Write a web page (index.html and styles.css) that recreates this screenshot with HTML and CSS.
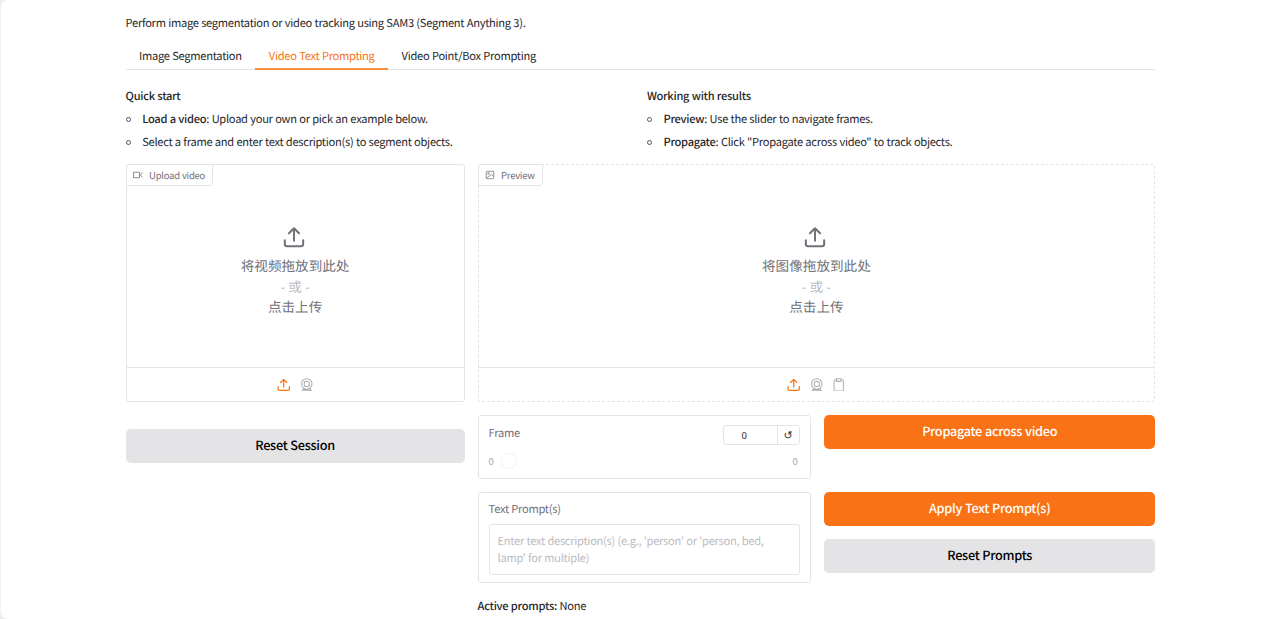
FILE: index.html
```
<!DOCTYPE html>
<html lang="en">
<head>
    <meta charset="utf-8">
    <title>SAM3 Segmentation and Tracking</title>
    <link rel="stylesheet" href="styles.css">
</head>
<body>
    <svg class="sprite" width="0" height="0">
        <symbol id="upload" viewBox="0 0 24 24" fill="none" stroke="currentColor" stroke-width="2.2" stroke-linecap="round" stroke-linejoin="round">
            <path d="M12 16V2.5M6.5 8L12 2.5L17.5 8M2 15.5v4a2.5 2.5 0 0 0 2.5 2.5h15a2.5 2.5 0 0 0 2.5-2.5v-4"/>
        </symbol>
        <symbol id="webcam" viewBox="0 0 24 24" fill="none" stroke="currentColor" stroke-width="1.8">
            <circle cx="12" cy="10.5" r="9.3"/>
            <circle cx="12" cy="10.5" r="4.8"/>
            <path d="M7 18.5L4 22.6H20L17 18.5M7 20.6H17"/>
        </symbol>
        <symbol id="clipboard" viewBox="0 0 24 24" fill="none" stroke="currentColor" stroke-width="1.8">
            <path d="M8 3H5.5A1.8 1.8 0 0 0 3.7 4.8V21.2A1.8 1.8 0 0 0 5.5 23H18.5A1.8 1.8 0 0 0 20.3 21.2V4.8A1.8 1.8 0 0 0 18.5 3H16M8 1.5H16V6H8Z"/>
        </symbol>
    </svg>

    <div class="page">
        <main class="container">
            <p class="intro">Perform image segmentation or video tracking using SAM3 (Segment Anything 3).</p>

            <nav class="tabs">
                <button class="tab">Image Segmentation</button>
                <button class="tab active">Video Text Prompting</button>
                <button class="tab">Video Point/Box Prompting</button>
            </nav>

            <div class="help">
                <div>
                    <h4>Quick start</h4>
                    <ul>
                        <li><b>Load a video</b>: Upload your own or pick an example below.</li>
                        <li>Select a frame and enter text description(s) to segment objects.</li>
                    </ul>
                </div>
                <div>
                    <h4>Working with results</h4>
                    <ul>
                        <li><b>Preview</b>: Use the slider to navigate frames.</li>
                        <li><b>Propagate</b>: Click "Propagate across video" to track objects.</li>
                    </ul>
                </div>
            </div>

            <div class="columns">
                <div class="left">
                    <div class="panel">
                        <div class="panel-label">
                            <svg class="label-icon" viewBox="0 0 20 20" fill="none" stroke="currentColor" stroke-width="1.6"><path d="M1 4.5H13V15.5H1ZM19 5.5L15.5 8.5V11.5L19 14.5"/></svg>
                            Upload video
                        </div>
                        <div class="drop">
                            <svg class="drop-icon"><use href="#upload"/></svg>
                            <span>将视频拖放到此处</span>
                            <span class="or">- 或 -</span>
                            <span>点击上传</span>
                        </div>
                        <div class="sources">
                            <svg class="source up"><use href="#upload"/></svg>
                            <svg class="source"><use href="#webcam"/></svg>
                        </div>
                    </div>
                    <button class="btn reset-session">Reset Session</button>
                </div>

                <div class="right">
                    <div class="panel dashed">
                        <div class="panel-label">
                            <svg class="label-icon" viewBox="0 0 20 20" fill="none" stroke="currentColor" stroke-width="1.5"><rect x="2.5" y="2.5" width="15" height="15" rx="1.5"/><circle cx="7" cy="7" r="1.5"/><path d="M3 16L12.5 9L17.5 13"/></svg>
                            Preview
                        </div>
                        <div class="drop">
                            <svg class="drop-icon"><use href="#upload"/></svg>
                            <span>将图像拖放到此处</span>
                            <span class="or">- 或 -</span>
                            <span>点击上传</span>
                        </div>
                        <div class="sources">
                            <svg class="source up"><use href="#upload"/></svg>
                            <svg class="source"><use href="#webcam"/></svg>
                            <svg class="source"><use href="#clipboard"/></svg>
                        </div>
                    </div>

                    <div class="controls">
                        <div class="block frame">
                            <div class="frame-head">
                                <span class="block-label">Frame</span>
                                <div class="number">
                                    <span class="value">0</span>
                                    <span class="undo">↺</span>
                                </div>
                            </div>
                            <div class="slider">
                                <span>0</span>
                                <i class="thumb"></i>
                                <span class="max">0</span>
                            </div>
                        </div>
                        <div class="buttons">
                            <button class="btn primary">Propagate across video</button>
                        </div>
                        <div class="block prompt">
                            <span class="block-label">Text Prompt(s)</span>
                            <textarea placeholder="Enter text description(s) (e.g., 'person' or 'person, bed, lamp' for multiple)"></textarea>
                        </div>
                        <div class="buttons">
                            <button class="btn primary">Apply Text Prompt(s)</button>
                            <button class="btn">Reset Prompts</button>
                        </div>
                    </div>

                    <p class="active-prompts"><b>Active prompts:</b> None</p>
                </div>
            </div>
        </main>
    </div>
</body>
</html>
```
FILE: styles.css
```
* { box-sizing: border-box; }
body {
    margin: 0;
    background: #eeeeee;
    color: #27272a;
    font-family: "Noto Sans CJK SC", sans-serif;
    font-size: 11.1px;
    letter-spacing: -0.27px;
    word-spacing: 0.3px;
    line-height: 20px;
    text-rendering: geometricPrecision;
    overflow: hidden;
}
p, h4, ul { margin: 0; padding: 0; }
b, h4 { font-weight: 500; }
button, textarea { font-family: inherit; letter-spacing: inherit; word-spacing: inherit; text-rendering: inherit; }
svg { display: block; flex-shrink: 0; }
.sprite { position: absolute; }

.page {
    height: 619px;
    background: #fff;
    border-left: 1px solid #f4f4f5;
    border-radius: 8px 0 0 8px;
}
.container { width: 1029.6px; margin-left: 124.6px; padding-top: 13px; }

.tabs { display: flex; height: 27px; margin-top: 10px; border-bottom: 1px solid #e4e4e7; }
.tab {
    height: 27px;
    padding: 2px 13.5px 0;
    border: 0;
    border-bottom: 2px solid transparent;
    background: none;
    color: #27272a;
    font-size: 11.1px;
    line-height: 23px;
}
.tab.active { color: #f97316; border-color: #fb8c3e; }

.help { display: grid; grid-template-columns: 1fr 1fr; column-gap: 13px; margin-top: 16px; }
.help h4 { font-size: 11.1px; line-height: 20px; margin-bottom: 3px; }
.help ul { list-style: none; }
.help li { display: block; position: relative; padding-left: 16.6px; height: 23px; }
.help li::before {
    content: "";
    position: absolute;
    left: 0;
    top: 8px;
    width: 5px;
    height: 5px;
    box-sizing: border-box;
    border: 1px solid #52525b;
    border-radius: 50%;
}

.columns { display: flex; gap: 13px; margin-top: 9px; }
.left { width: 339px; }
.right { width: 677.6px; }

.panel {
    display: flex;
    flex-direction: column;
    position: relative;
    height: 238px;
    border: 1px solid #e4e4e7;
    border-radius: 3px;
}
.panel.dashed { border-style: dashed; }
.panel-label {
    position: absolute;
    left: -1px;
    top: -1px;
    display: flex;
    align-items: center;
    gap: 6px;
    height: 22px;
    padding: 0 7px 0 6.5px;
    border: 1px solid #e4e4e7;
    border-radius: 3px 0 3px 0;
    background: #fff;
    color: #71717a;
    font-size: 9.5px;
}
.label-icon { width: 10px; height: 10px; }
.drop {
    flex: 1;
    display: flex;
    flex-direction: column;
    align-items: center;
    justify-content: center;
    padding-top: 10.6px;
    color: #71717a;
    font-size: 13.6px;
    letter-spacing: 0;
    word-spacing: 0;
    line-height: 20.4px;
}
.drop-icon { width: 22px; height: 22px; margin: 0 2px 7px 0; color: #71717a; }
.or { color: #bbbbc2; }
.sources {
    display: flex;
    align-items: center;
    justify-content: center;
    gap: 9px;
    height: 34px;
    border-top: 1px solid #e4e4e7;
    color: #adadb5;
}
.source { width: 13.5px; height: 13.5px; }
.source.up { color: #f97316; }

.btn {
    display: block;
    width: 100%;
    height: 34px;
    padding: 0 0 2px;
    border: 0;
    border-radius: 5px;
    background: #e4e4e7;
    color: #000;
    font-size: 12.7px;
    font-weight: 500;
    line-height: 32px;
}
.btn.primary { background: #f97316; color: #fff; }
.reset-session { margin-top: 27px; }

.controls {
    display: grid;
    grid-template-columns: 333px 331px;
    gap: 13px 13.6px;
    margin-top: 13px;
}
.block {
    border: 1px solid #e4e4e7;
    border-radius: 3px;
    padding: 0 10px;
}
.block-label { display: block; color: #71717a; line-height: 20px; }
.frame { height: 64px; padding-top: 7px; }
.frame-head { display: flex; justify-content: space-between; }
.number {
    display: flex;
    width: 77px;
    height: 20px;
    margin-top: 2px;
    border: 1px solid #e4e4e7;
    border-radius: 3px;
    font-size: 9.8px;
    line-height: 19px;
    text-align: center;
}
.value { width: 53px; padding-right: 12px; }
.undo { flex: 1; border-left: 1px solid #e4e4e7; font-family: "DejaVu Sans", sans-serif; font-size: 11px; }
.slider { display: flex; align-items: center; height: 20px; margin-top: 6px; color: #a1a1aa; font-size: 9.5px; }
.thumb {
    width: 14px;
    height: 14px;
    margin-left: 8px;
    border-radius: 50%;
    background: #fff;
    box-shadow: 0 0 2px rgba(0, 0, 0, 0.15);
}
.max { margin-left: auto; padding-right: 2px; }
.buttons { display: flex; flex-direction: column; gap: 13px; }
.prompt { height: 91px; padding-top: 6px; }
.prompt textarea {
    display: block;
    width: 311px;
    height: 51px;
    margin-top: 5px;
    padding: 8px;
    border: 1px solid #e4e4e7;
    border-radius: 3px;
    resize: none;
    font-size: 11.1px;
    line-height: 17px;
    overflow: hidden;
}
.prompt textarea::placeholder { color: #bbbbc2; }
.active-prompts { margin-top: 13px; }
```
